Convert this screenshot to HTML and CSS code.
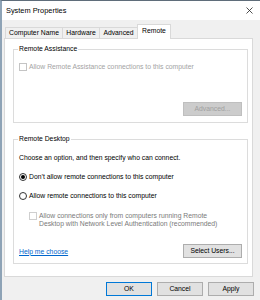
FILE: index.html
```html
<!DOCTYPE html>
<html>
<head>
<meta charset="utf-8">
<link rel="stylesheet" href="styles.css">
</head>
<body>
<div class="window">
  <div class="titlebar">
    <span class="title">System Properties</span>
    <svg class="close" viewBox="0 0 7 7"><path d="M0.5 0.5L6.5 6.5M6.5 0.5L0.5 6.5" stroke="#222" stroke-width="0.8" fill="none"/></svg>
  </div>
  <div class="tabs">
    <div class="tab t1">Computer Name</div>
    <div class="tab t2">Hardware</div>
    <div class="tab t3">Advanced</div>
    <div class="tab t4 active">Remote</div>
  </div>
  <div class="panel">
    <fieldset class="group g1">
      <legend>Remote Assistance</legend>
      <div class="row check disabled"><span class="box"></span><span>Allow Remote Assistance connections to this computer</span></div>
      <div class="btnrow"><div class="btn off">Advanced...</div></div>
    </fieldset>
    <fieldset class="group g2">
      <legend>Remote Desktop</legend>
      <div class="row intro">Choose an option, and then specify who can connect.</div>
      <div class="row radio r1"><span class="dot on"></span><span>Don’t allow remote connections to this computer</span></div>
      <div class="row radio r2"><span class="dot"></span><span>Allow remote connections to this computer</span></div>
      <div class="nla"><span class="box"></span><span class="nlatext">Allow connections only from computers running Remote<br>Desktop with Network Level Authentication (recommended)</span></div>
      <div class="footrow"><span class="link">Help me choose</span><div class="btn">Select Users...</div></div>
    </fieldset>
  </div>
  <div class="buttons">
    <div class="btn dlg default">OK</div>
    <div class="btn dlg">Cancel</div>
    <div class="btn dlg">Apply</div>
  </div>
</div>
</body>
</html>
```
FILE: styles.css
```css
* { box-sizing: border-box; }
html, body { margin: 0; padding: 0; }
body {
  font-family: "Liberation Sans", Arial, sans-serif;
  font-size: 6.8px;
  color: #000;
  background: #f0f0f0;
}
.window {
  width: 260px;
  height: 300px;
  background: #f0f0f0;
  border-top: 1px solid #5f6d7a;
  border-left: 2px solid #8ea3b6;
  display: flex;
  flex-direction: column;
}
.titlebar {
  height: 19px;
  flex: none;
  background: #fff;
  display: flex;
  align-items: center;
  justify-content: space-between;
  padding: 0 7px 0 4px;
}
.title { font-size: 7.4px; }
.close { width: 7px; height: 7px; display: block; }
.tabs {
  height: 18px;
  flex: none;
  display: flex;
  align-items: flex-end;
  padding-left: 3px;
}
.tab {
  height: 11px;
  line-height: 10px;
  text-align: center;
  border: 1px solid #d9d9d9;
  border-bottom: none;
  margin-right: -1px;
  background: #f0f0f0;
  white-space: nowrap;
}
.t1 { width: 58px; }
.t2 { width: 38px; }
.t3 { width: 39px; }
.t4 { width: 34px; }
.tab.active {
  height: 15px;
  line-height: 12px;
  background: #fff;
  position: relative;
  z-index: 1;
  margin-bottom: -1px;
}
.panel {
  flex: none;
  height: 239px;
  width: 249px;
  margin-left: 2px;
  background: #fff;
  border: 1px solid #d9d9d9;
  padding: 6px 4px 0 8px;
}
.group {
  margin: 0;
  width: 235px;
  min-width: 0;
  border: 1px solid #dcdcdc;
  padding: 0 5px 6px 5px;
}
.group legend {
  padding: 0 1px;
  margin-left: -1px;
  line-height: 8px;
  height: 8px;
}
.g2 { margin-top: 12px; padding-bottom: 5px; }
.row {
  display: flex;
  align-items: center;
  height: 10px;
  line-height: 10px;
  white-space: nowrap;
}
.check { margin-top: 9px; }
.disabled { color: #a3a3a3; }
.box {
  width: 8px;
  height: 8px;
  border: 1px solid #c4c4c4;
  background: #fff;
  margin-right: 2px;
  flex: none;
}
.btnrow {
  display: flex;
  justify-content: flex-end;
  margin-top: 30px;
}
.btn {
  width: 59px;
  height: 14px;
  line-height: 12px;
  text-align: center;
  border: 1px solid #adadad;
  background: #e1e1e1;
  white-space: nowrap;
}
.btn.off {
  background: #cccccc;
  border-color: #bfbfbf;
  color: #a0a0a0;
}
.intro { margin-top: 10px; }
.radio { margin-top: 9px; }
.dot {
  width: 8px;
  height: 8px;
  border-radius: 50%;
  border: 1px solid #333;
  background: #fff;
  margin-right: 2px;
  flex: none;
  display: flex;
  align-items: center;
  justify-content: center;
}
.dot.on::after {
  content: "";
  width: 4px;
  height: 4px;
  border-radius: 50%;
  background: #000;
}
.nla {
  display: flex;
  align-items: flex-start;
  margin-top: 11px;
  padding-left: 10px;
  color: #7a7a7a;
}
.nla .box { border-color: #cfcfcf; margin-top: 0; }
.nlatext { line-height: 8px; white-space: nowrap; }
.footrow {
  display: flex;
  justify-content: space-between;
  align-items: center;
  margin-top: 16px;
}
.link { color: #0066cc; text-decoration: underline; }
.buttons {
  flex: none;
  display: flex;
  justify-content: flex-end;
  gap: 5px;
  margin-top: 5px;
  padding-right: 6px;
}
.btn.dlg { width: 46px; }
.btn.default { border-color: #0078d7; }
```
